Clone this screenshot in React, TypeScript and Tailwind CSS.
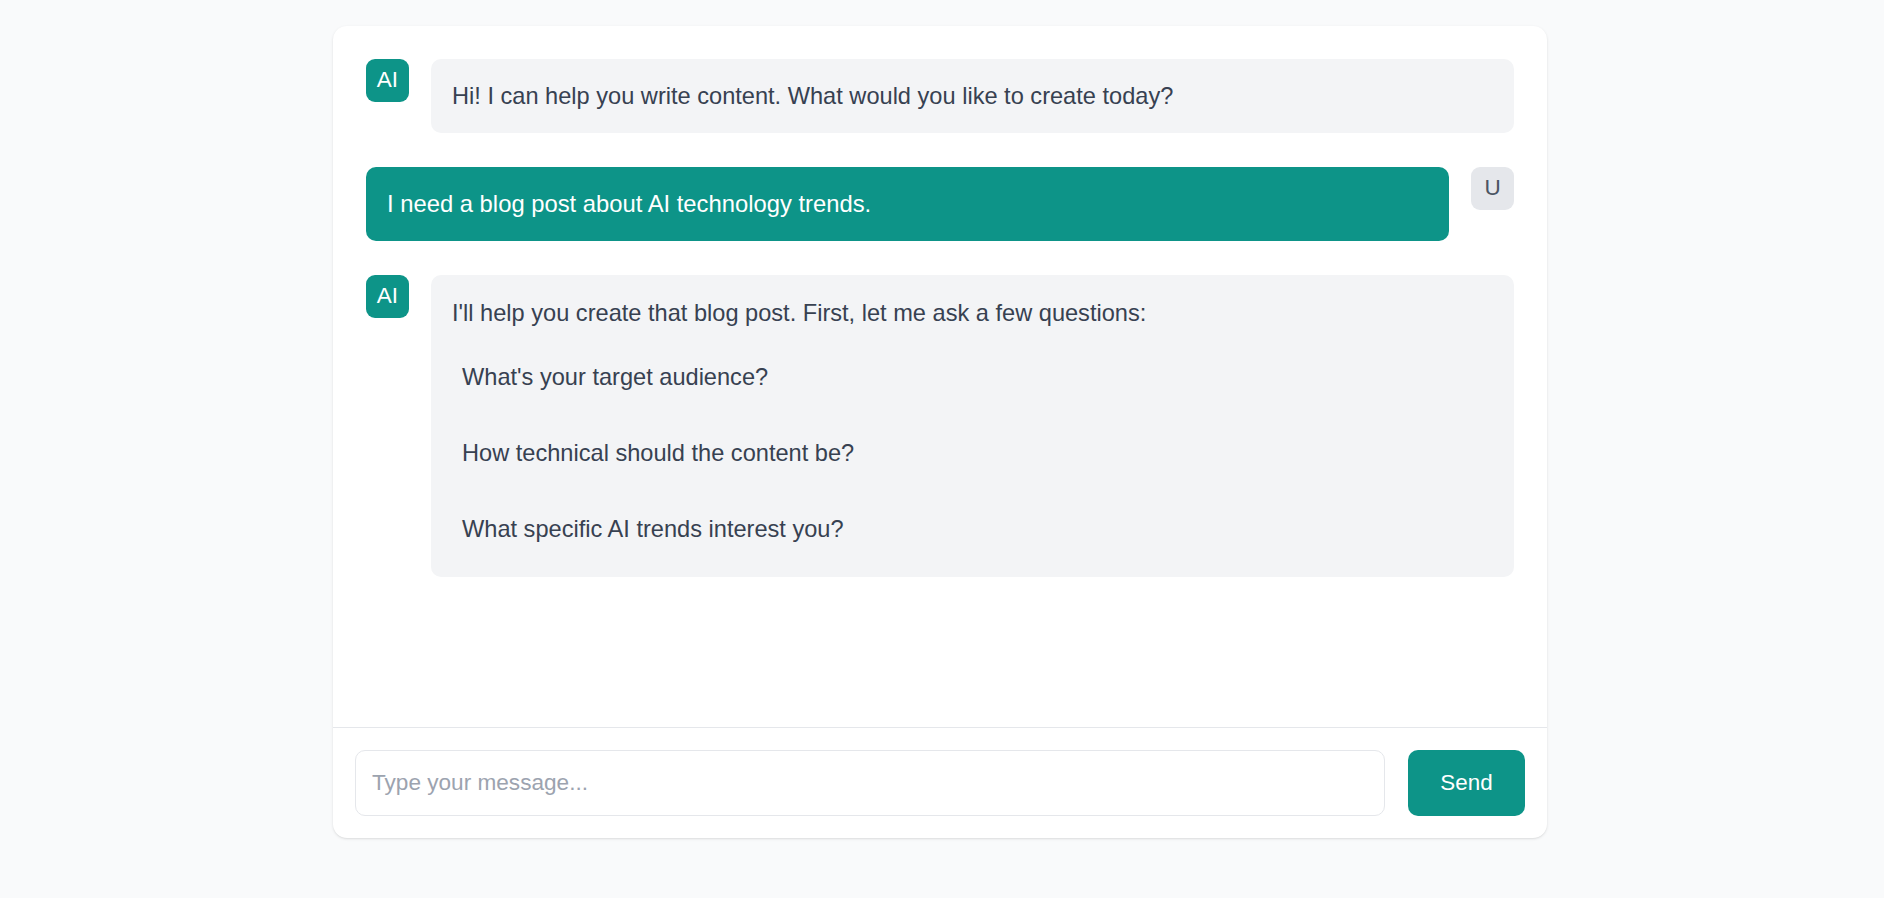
import React from "react";

function AIAvatar() {
  return (
    <div className="w-[43px] h-[43px] shrink-0 rounded-[9px] bg-[#0d9488] text-white flex items-center justify-center text-[22.5px] leading-none">
      AI
    </div>
  );
}

function UserAvatar() {
  return (
    <div className="w-[43px] h-[43px] shrink-0 rounded-[9px] bg-[#e5e7eb] text-[#4b5563] flex items-center justify-center text-[22.5px] leading-none">
      U
    </div>
  );
}

export default function App() {
  return (
    <div
      className="min-h-screen bg-[#f9fafb] pt-[26px] flex justify-center pr-[4px]"
      style={{ fontFamily: '"Liberation Sans", Arial, sans-serif' }}
    >
      <div className="w-[1214px] h-[812px] bg-white rounded-[14px] shadow-sm flex flex-col">
        <div className="flex-1 p-[33px] flex flex-col gap-[34px]">
          <div className="flex items-start gap-[22px]">
            <AIAvatar />
            <div className="flex-1 bg-[#f3f4f6] rounded-[10px] px-[21px] py-[19px] text-[23.6px] leading-[36px] text-[#374151]">
              Hi! I can help you write content. What would you like to create today?
            </div>
          </div>

          <div className="flex items-start gap-[22px]">
            <div className="flex-1 bg-[#0d9488] rounded-[10px] px-[21px] py-[19px] text-[23.8px] leading-[36px] text-white">
              I need a blog post about AI technology trends.
            </div>
            <UserAvatar />
          </div>

          <div className="flex items-start gap-[22px]">
            <AIAvatar />
            <div className="flex-1 bg-[#f3f4f6] rounded-[10px] px-[21px] py-[19px] text-[23.6px] leading-[39px] text-[#374151]">
              <p>I'll help you create that blog post. First, let me ask a few questions:</p>
              <ul className="mt-[25px] mb-[9px] flex flex-col gap-[37px] pl-[10px]">
                <li>What's your target audience?</li>
                <li>How technical should the content be?</li>
                <li>What specific AI trends interest you?</li>
              </ul>
            </div>
          </div>
        </div>

        <div className="border-t border-[#e5e7eb] p-[22px] flex gap-[23px]">
          <input
            type="text"
            placeholder="Type your message..."
            className="flex-1 h-[66px] rounded-[10px] border border-[#e5e7eb] px-[16px] text-[22.6px] text-[#374151] placeholder:text-[#9ca3af] outline-none bg-white"
          />
          <button className="w-[117px] h-[66px] rounded-[10px] bg-[#0d9488] text-white text-[22.4px]">
            Send
          </button>
        </div>
      </div>
    </div>
  );
}
